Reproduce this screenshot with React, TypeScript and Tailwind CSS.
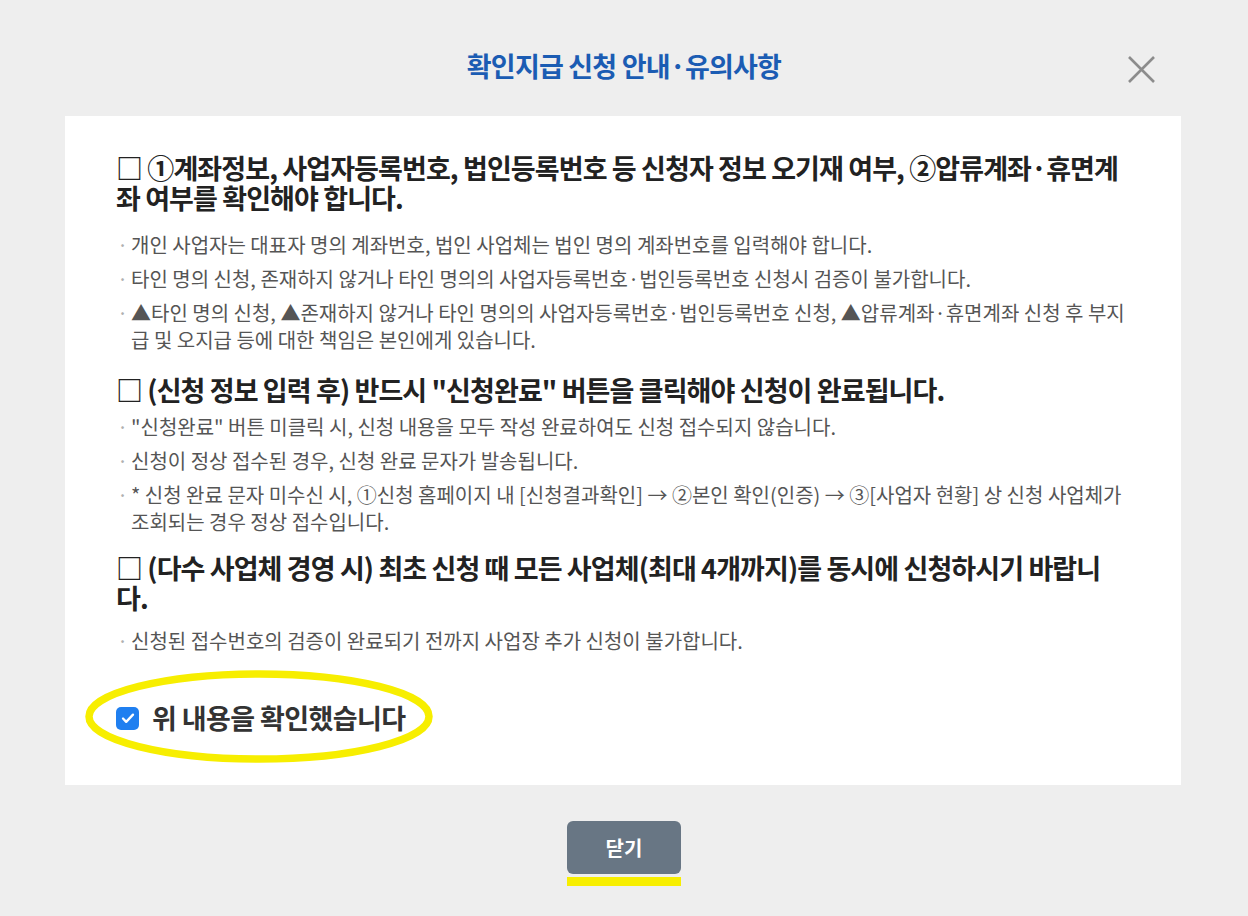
const font = { fontFamily: '"Noto Sans CJK KR", "Noto Sans", sans-serif' };

type Section = {
  title: string;
  items: string[];
  listClass: string;
};

const sections: Section[] = [
  {
    title:
      "□ ①계좌정보, 사업자등록번호, 법인등록번호 등 신청자 정보 오기재 여부, ②압류계좌·휴면계좌 여부를 확인해야 합니다.",
    items: [
      "개인 사업자는 대표자 명의 계좌번호, 법인 사업체는 법인 명의 계좌번호를 입력해야 합니다.",
      "타인 명의 신청, 존재하지 않거나 타인 명의의 사업자등록번호·법인등록번호 신청시 검증이 불가합니다.",
      "▲타인 명의 신청, ▲존재하지 않거나 타인 명의의 사업자등록번호·법인등록번호 신청, ▲압류계좌·휴면계좌 신청 후 부지급 및 오지급 등에 대한 책임은 본인에게 있습니다.",
    ],
    listClass: "mt-[18px] mb-[22px]",
  },
  {
    title: '□ (신청 정보 입력 후) 반드시 "신청완료" 버튼을 클릭해야 신청이 완료됩니다.',
    items: [
      '"신청완료" 버튼 미클릭 시, 신청 내용을 모두 작성 완료하여도 신청 접수되지 않습니다.',
      "신청이 정상 접수된 경우, 신청 완료 문자가 발송됩니다.",
      "* 신청 완료 문자 미수신 시, ①신청 홈페이지 내 [신청결과확인] → ②본인 확인(인증) → ③[사업자 현황] 상 신청 사업체가 조회되는 경우 정상 접수입니다.",
    ],
    listClass: "mt-[8px] mb-[18px]",
  },
  {
    title: "□ (다수 사업체 경영 시) 최초 신청 때 모든 사업체(최대 4개까지)를 동시에 신청하시기 바랍니다.",
    items: ["신청된 접수번호의 검증이 완료되기 전까지 사업장 추가 신청이 불가합니다."],
    listClass: "mt-[14px]",
  },
];

function NoticeSection({ section }: { section: Section }) {
  return (
    <div className="flex flex-col">
      <h3 className="text-[27px] leading-[30px] font-bold text-[#222] tracking-[-0.9px] break-all">{section.title}</h3>
      <ul className={`flex flex-col gap-[7px] ${section.listClass}`}>
        {section.items.map((item) => (
          <li key={item} className="relative pl-[15px] text-[20px] leading-[27px] text-[#555] break-all">
            <span className="absolute left-[1px] top-0 text-[#b0b0b0]">·</span>
            {item}
          </li>
        ))}
      </ul>
    </div>
  );
}

export default function App() {
  return (
    <div className="w-[1248px] h-[916px] bg-[#eeeeee] flex flex-col" style={font}>
      <header className="relative h-[116px] flex justify-center">
        <h2 className="pt-[48px] text-[27px] leading-[36px] font-bold text-[#1b5cb3] tracking-[-0.8px]">
          확인지급 신청 안내·유의사항
        </h2>
        <button className="absolute left-[1128px] top-[56px]" aria-label="닫기">
          <svg width="27" height="27" viewBox="0 0 27 27">
            <path d="M1 1L26 26M26 1L1 26" stroke="#8c8c8c" strokeWidth="2.6" />
          </svg>
        </button>
      </header>

      <main className="mx-[65px] w-[1116px] h-[669px] bg-white pl-[51px] pr-[54px] pt-[37px]">
        {sections.map((s) => (
          <NoticeSection key={s.title} section={s} />
        ))}

        <div className="relative mt-[46px] flex items-center gap-[13px]">
          <span className="w-[23px] h-[23px] rounded-[5px] bg-[#1f7ff0] flex items-center justify-center">
            <svg width="16" height="16" viewBox="0 0 16 16" fill="none">
              <path d="M3 8.5l3.2 3.4L13 4.6" stroke="white" strokeWidth="2.3" strokeLinecap="round" strokeLinejoin="round" />
            </svg>
          </span>
          <span className="text-[27px] leading-[36px] font-semibold text-[#333] tracking-[-0.6px]">위 내용을 확인했습니다</span>
          <svg className="absolute left-[-31px] top-[-30px] pointer-events-none" width="348" height="93" viewBox="0 0 348 93">
            <ellipse cx="174" cy="46.5" rx="170" ry="42.5" fill="none" stroke="#f7ee00" strokeWidth="7.5" />
          </svg>
        </div>
      </main>

      <div className="flex justify-center pt-[36px]">
        <div className="flex flex-col items-center gap-[3px]">
          <button className="w-[114px] h-[53px] rounded-[6px] bg-[#687684] text-white text-[20px] font-bold">닫기</button>
          <span className="w-[114px] h-[9px] bg-[#f7ee00]" />
        </div>
      </div>
    </div>
  );
}
